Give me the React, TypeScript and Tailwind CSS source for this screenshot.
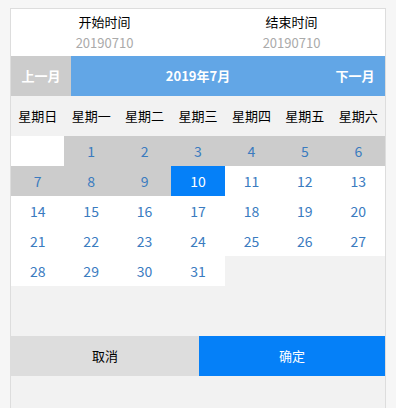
import React from "react";

const weekdays = ["星期日", "星期一", "星期二", "星期三", "星期四", "星期五", "星期六"];

export default function App() {
  const cells: (number | null)[] = [null];
  for (let d = 1; d <= 31; d++) cells.push(d);
  return (
    <div
      className="w-[396px] h-[408px] bg-[#f6f6f6] pt-[8px] px-[10px] overflow-hidden"
      style={{ fontFamily: '"Noto Sans CJK SC", "Noto Sans", sans-serif' }}
    >
      <div className="border border-[#dddddd] bg-[#f2f2f2] h-[420px]">
        <div className="flex bg-white h-[47px]">
          <div className="flex-1 flex flex-col items-center pt-[3px]">
            <div className="text-[13px] leading-[20px] text-black">开始时间</div>
            <div className="text-[13px] leading-[21px] text-[#aaaaaa]">20190710</div>
          </div>
          <div className="flex-1 flex flex-col items-center pt-[3px]">
            <div className="text-[13px] leading-[20px] text-black">结束时间</div>
            <div className="text-[13px] leading-[21px] text-[#aaaaaa]">20190710</div>
          </div>
        </div>
        <div className="flex h-[40px] text-white font-bold text-[13px]">
          <div className="w-[60px] bg-[#cccccc] flex items-center justify-center">上一月</div>
          <div className="flex-1 bg-[#62a6e6] flex items-center justify-center">2019年7月</div>
          <div className="w-[60px] bg-[#62a6e6] flex items-center justify-center">下一月</div>
        </div>
        <div className="grid grid-cols-7 h-[40px] bg-[#f2f2f2]">
          {weekdays.map((w) => (
            <div key={w} className="flex items-center justify-center text-[13px] text-black">
              {w}
            </div>
          ))}
        </div>
        <div className="grid grid-cols-7 auto-rows-[30px]">
          {cells.map((d, i) => {
            let cls = "bg-white text-[#3a7bbf]";
            if (d !== null && d < 10) cls = "bg-[#cccccc] text-[#3a7bbf]";
            if (d === 10) cls = "bg-[#0580f8] text-white";
            return (
              <div key={i} className={`flex items-center justify-center text-[14px] ${cls}`}>
                {d ?? ""}
              </div>
            );
          })}
        </div>
        <div className="h-[50px]" />
        <div className="flex h-[40px] text-[13px]">
          <div className="w-[188px] bg-[#dddddd] flex items-center justify-center text-black">取消</div>
          <div className="flex-1 bg-[#0580f8] flex items-center justify-center text-white">确定</div>
        </div>
      </div>
    </div>
  );
}
